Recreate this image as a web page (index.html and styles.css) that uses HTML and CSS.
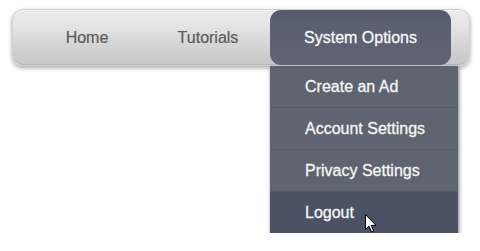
FILE: index.html
```html
<!DOCTYPE html>
<html>
<head>
<meta charset="utf-8">
<link rel="stylesheet" href="styles.css">
</head>
<body>
<nav class="bar">
  <div class="menu">
    <div class="item item-home"><a href="#">Home</a></div>
    <div class="item item-tut"><a href="#">Tutorials</a></div>
    <div class="item item-sys">
      <a href="#" class="tab">System Options</a>
    </div>
  </div>
</nav>
<div class="dropdown">
  <div class="drow"><span class="dlabel">Create an Ad</span></div>
  <div class="drow"><span class="dlabel">Account Settings</span></div>
  <div class="drow"><span class="dlabel">Privacy Settings</span></div>
  <div class="drow drow-hover"><span class="dlabel">Logout</span>
    <svg class="cursor" width="12" height="19" viewBox="0 0 12 19"><path d="M0.5 0.5 L0.5 15.5 L4 12.2 L6.6 18 L8.7 17.1 L6.2 11.4 L11 11.4 Z" fill="#fff" stroke="#000" stroke-width="1" stroke-linejoin="miter"/></svg>
  </div>
</div>
</body>
</html>
```
FILE: styles.css
```css
html, body {
  margin: 0;
  padding: 0;
  background: #ffffff;
}
body {
  padding: 9px 10px 0 12px;
  font-family: "Liberation Sans", Arial, sans-serif;
}
.bar {
  width: 458px;
  height: 57px;
  box-sizing: border-box;
  border-radius: 11px;
  background: linear-gradient(to bottom, #ececec 0%, #e4e4e4 30%, #d6d6d6 60%, #c6c6c6 100%);
  box-shadow: 0 2px 4px rgba(0,0,0,0.35), inset 0 1px 0 #f4f4f4, inset 0 -1px 0 #b8b8b8;
  border: 1px solid #d0d0d0;
}
.menu {
  display: flex;
  height: 100%;
  padding-left: 15px;
}
.item {
  display: flex;
  align-items: center;
  justify-content: center;
  font-size: 16px;
}
.item a {
  text-decoration: none;
}
.item-home { width: 118px; }
.item-tut { width: 124px; }
.item-home a, .item-tut a {
  color: #5a5a5a;
  -webkit-text-stroke: 0.2px #5a5a5a;
}
.item-sys {
  width: 181px;
  align-items: stretch;
}
.tab {
  display: flex;
  align-items: center;
  justify-content: center;
  width: 100%;
  border-radius: 11px;
  background: linear-gradient(to bottom, #525968 0%, #5a6070 25%, #5e6471 100%);
  color: #f8f8f8;
  -webkit-text-stroke: 0.3px #f8f8f8;
}
.dropdown {
  width: 188px;
  margin-left: 258px;
  background: #5e6470;
  box-shadow: 1px 2px 4px rgba(0,0,0,0.5);
}
.drow {
  height: 42px;
  box-sizing: border-box;
  display: flex;
  align-items: center;
  padding-left: 35px;
  border-bottom: 1px solid #545a66;
  position: relative;
}
.dlabel {
  color: #f6f6f6;
  font-size: 16px;
  -webkit-text-stroke: 0.3px #f6f6f6;
}
.drow-hover {
  height: 41px;
  background: #4a5263;
  border-bottom: none;
}
.cursor {
  position: absolute;
  left: 95px;
  top: 22px;
}
```
